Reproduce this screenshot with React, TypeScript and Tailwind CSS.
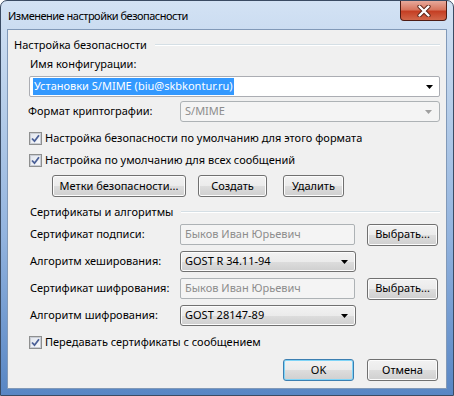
import React from "react";

const font = "font-['Noto_Sans',sans-serif]";

function Check() {
  return (
    <span className="flex h-[13px] w-[13px] shrink-0 items-center justify-center border border-[#8e8f8f] bg-gradient-to-br from-[#dcdcdc] to-[#fbfbfb]">
      <span className="flex h-[11px] w-[11px] items-center justify-center border border-[#c9cdd5] bg-gradient-to-br from-[#e2e6ee] to-[#f8f9fb]">
        <svg width="9" height="9" viewBox="0 0 9 9">
          <path d="M1 4.5 L3.5 7.2 L8 1.2" fill="none" stroke="#4a5f97" strokeWidth="1.8" />
        </svg>
      </span>
    </span>
  );
}

function CheckRow({ label, className }: { label: string; className: string }) {
  return (
    <div className={`flex h-[16px] items-center ml-[15px] ${className}`}>
      <Check />
      <span className="ml-[3px] whitespace-nowrap text-[11px] text-black">{label}</span>
    </div>
  );
}

function Button({ label, w, className = "", primary = false }: { label: string; w: string; className?: string; primary?: boolean }) {
  return (
    <div
      className={`flex h-[22px] items-center justify-center rounded-[3px] border text-[11px] text-black ${w} ${className} ${
        primary ? "border-[#3c7fb1] shadow-[inset_0_0_0_1px_#7fd4f7]" : "border-[#707070] shadow-[inset_0_0_0_1px_#fcfcfc]"
      } bg-[linear-gradient(#f2f2f2_0%,#ebebeb_50%,#dddddd_51%,#cfcfcf_100%)]`}
    >
      {label}
    </div>
  );
}

function Arrow({ color = "#000" }: { color?: string }) {
  return (
    <svg width="7" height="4" viewBox="0 0 7 4">
      <path d="M0 0 H7 L3.5 4 Z" fill={color} />
    </svg>
  );
}

function DropList({ value }: { value: string }) {
  return (
    <div className="flex h-[21px] w-[176px] items-center justify-between rounded-[3px] border border-[#707070] bg-[linear-gradient(#f2f2f2_0%,#ebebeb_50%,#dddddd_51%,#cfcfcf_100%)] pl-[4px] pr-[7px] text-[11px] text-black shadow-[inset_0_0_0_1px_#fcfcfc]">
      <span>{value}</span>
      <Arrow />
    </div>
  );
}

function TextBox({ value }: { value: string }) {
  return (
    <div className="flex h-[21px] w-[175px] items-center rounded-[2px] border border-[#adb2b5] bg-[#f4f4f4] pl-[4px] text-[11px] text-[#8d8d8d]">
      {value}
    </div>
  );
}

function Group({ title, className }: { title: string; className: string }) {
  return (
    <div className={`flex h-[16px] items-center ${className}`}>
      <span className="whitespace-nowrap text-[11px] text-black">{title}</span>
      <div className="ml-[8px] flex-1 border-t border-b border-t-[#d5dfe5] border-b-white" />
    </div>
  );
}

function Field({ label, children, className }: { label: string; children: React.ReactNode; className: string }) {
  return (
    <div className={`flex h-[21px] items-center ml-[16px] ${className}`}>
      <span className="w-[150px] shrink-0 whitespace-nowrap text-[11px] text-black">{label}</span>
      {children}
    </div>
  );
}

export default function App() {
  return (
    <div className={`flex h-[396px] w-[454px] flex-col rounded-t-[7px] border border-[#3a4b63] bg-[linear-gradient(#d3e2f4_0%,#b8cfea_25%,#92b3de_60%,#5886c4_100%)] ${font}`}>
      <div className="flex h-[28px] items-start">
        <span className="ml-[7px] mt-[7px] text-[11px] leading-[16px] tracking-[-0.5px] text-black">Изменение настройки безопасности</span>
        <div className="ml-auto mr-[6px] flex h-[20px] w-[47px] items-center justify-center rounded-b-[4px] border border-t-0 border-[#4e1c14] bg-[linear-gradient(#e7a99b_0%,#d8765f_45%,#c53f24_55%,#d2674a_100%)]">
          <svg width="14" height="12" viewBox="0 0 14 12">
            <path d="M2.5 1.5 L11.5 10.5 M11.5 1.5 L2.5 10.5" stroke="#5a2418" strokeWidth="4.2" strokeLinecap="round" />
            <path d="M2.5 1.5 L11.5 10.5 M11.5 1.5 L2.5 10.5" stroke="#ffffff" strokeWidth="2.4" strokeLinecap="round" />
          </svg>
        </div>
      </div>
      <div className="mx-[6px] h-[360px] border border-[#8199b8] bg-[#f0f0f0] px-[6px] pt-[7px]">
        <Group title="Настройка безопасности" className="" />
        <div className="ml-[16px] mt-[3px] flex h-[16px] items-center text-[11px] text-black">Имя конфигурации:</div>
        <div className="ml-[15px] mt-[4px] flex h-[21px] items-center justify-between rounded-[2px] border border-[#abadb3] bg-white pl-[3px] pr-[6px] text-[11px]">
          <span className="bg-[#3399ff] px-[1px] text-white">Установки S/MIME (biu@skbkontur.ru)</span>
          <Arrow />
        </div>
        <div className="ml-[14px] mt-[4px] flex h-[21px] items-center">
          <span className="w-[152px] shrink-0 text-[11px] text-black">Формат криптографии:</span>
          <div className="flex h-[21px] flex-1 items-center justify-between rounded-[3px] border border-[#adb2b5] bg-[#f4f4f4] pl-[4px] pr-[7px] text-[11px] text-[#8d8d8d]">
            <span>S/MIME</span>
            <Arrow color="#a0a0a0" />
          </div>
        </div>
        <CheckRow label="Настройка безопасности по умолчанию для этого формата" className="mt-[8px]" />
        <CheckRow label="Настройка по умолчанию для всех сообщений" className="mt-[6px]" />
        <div className="ml-[38px] mt-[7px] flex">
          <Button label="Метки безопасности..." w="w-[134px]" />
          <Button label="Создать" w="w-[69px]" className="ml-[12px]" />
          <Button label="Удалить" w="w-[61px]" className="ml-[16px]" />
        </div>
        <Group title="Сертификаты и алгоритмы" className="ml-[16px] mt-[7px]" />
        <Field label="Сертификат подписи:" className="mt-[4px]">
          <TextBox value="Быков Иван Юрьевич" />
          <Button label="Выбрать..." w="w-[71px]" className="ml-[12px]" />
        </Field>
        <Field label="Алгоритм хеширования:" className="mt-[6px]">
          <DropList value="GOST R 34.11-94" />
        </Field>
        <Field label="Сертификат шифрования:" className="mt-[6px]">
          <TextBox value="Быков Иван Юрьевич" />
          <Button label="Выбрать..." w="w-[71px]" className="ml-[12px]" />
        </Field>
        <Field label="Алгоритм шифрования:" className="mt-[6px]">
          <DropList value="GOST 28147-89" />
        </Field>
        <CheckRow label="Передавать сертификаты с сообщением" className="mt-[8px]" />
        <div className="mt-[9px] flex justify-end pr-[2px]">
          <Button label="OK" w="w-[71px]" primary />
          <Button label="Отмена" w="w-[71px]" className="ml-[13px]" />
        </div>
      </div>
    </div>
  );
}
